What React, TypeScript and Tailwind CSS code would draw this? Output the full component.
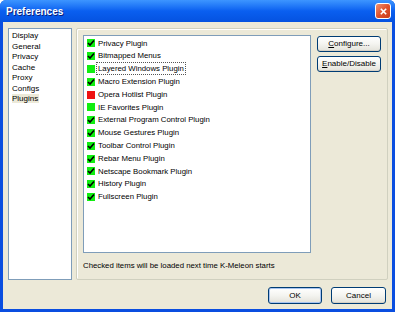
import React from 'react';

type Plugin = { name: string; state: 'on' | 'off' | 'bad' };

const plugins: Plugin[] = [
  { name: 'Privacy Plugin', state: 'on' },
  { name: 'Bitmapped Menus', state: 'on' },
  { name: 'Layered Windows Plugin', state: 'off' },
  { name: 'Macro Extension Plugin', state: 'on' },
  { name: 'Opera Hotlist Plugin', state: 'bad' },
  { name: 'IE Favorites Plugin', state: 'off' },
  { name: 'External Program Control Plugin', state: 'on' },
  { name: 'Mouse Gestures Plugin', state: 'on' },
  { name: 'Toolbar Control Plugin', state: 'on' },
  { name: 'Rebar Menu Plugin', state: 'on' },
  { name: 'Netscape Bookmark Plugin', state: 'on' },
  { name: 'History Plugin', state: 'on' },
  { name: 'Fullscreen Plugin', state: 'on' },
];

const pages = ['Display', 'General', 'Privacy', 'Cache', 'Proxy', 'Configs', 'Plugins'];

function StateIcon({ state }: { state: Plugin['state'] }) {
  const fill = state === 'bad' ? 'bg-[#ee1111]' : 'bg-[#11ee11]';
  return (
    <span className={`relative w-[8px] h-[8px] shrink-0 ${fill}`}>
      {state === 'on' && (
        <svg viewBox="0 0 8 8" className="absolute inset-0 w-[8px] h-[8px]">
          <path d="M1 4 L3 6 L7 1.5" fill="none" stroke="#000" strokeWidth="1.6" />
        </svg>
      )}
    </span>
  );
}

function XpButton({ children, className = '' }: { children: React.ReactNode; className?: string }) {
  return (
    <button
      className={`flex items-center justify-center rounded-[3px] border border-[#003c74] bg-gradient-to-b from-white via-[#f4f4f0] to-[#e3e2da] text-[8px] text-black shadow-[inset_0_-1px_0_#d6d0c5] ${className}`}
    >
      {children}
    </button>
  );
}

export default function App() {
  return (
    <div
      className="w-[395px] h-[312px] flex flex-col bg-[#0a4ee0] rounded-t-[6px] overflow-hidden"
      style={{ fontFamily: '"Liberation Sans", Arial, sans-serif' }}
    >
      {/* Title bar */}
      <div className="h-[22px] shrink-0 flex items-center justify-between pl-[6px] pr-[4px] bg-gradient-to-b from-[#3d95ff] via-[#0a5ff0] to-[#0552e0]">
        <span className="text-white font-bold text-[10px] [text-shadow:1px_1px_0_#0a1e7a]">Preferences</span>
        <div className="w-[16px] h-[16px] rounded-[3px] border border-white bg-gradient-to-br from-[#f09070] via-[#e0522c] to-[#c83a18] flex items-center justify-center">
          <svg viewBox="0 0 10 10" className="w-[9px] h-[9px]">
            <path d="M2 2 L8 8 M8 2 L2 8" stroke="#fff" strokeWidth="1.8" />
          </svg>
        </div>
      </div>

      {/* Client */}
      <div className="flex-1 mx-[3px] mb-[3px] bg-[#ece9d8] flex flex-col pt-[6px] pl-[5px] pr-[4px]">
        <div className="flex gap-[4px] h-[252px]">
          {/* Page list */}
          <div className="w-[64px] bg-white border border-[#7f9db9] pt-[2px] pl-[2px] text-[8px] leading-[10.5px] text-black">
            {pages.map((p) => (
              <div key={p} className="pl-[1px]">
                <span className={p === 'Plugins' ? 'bg-[#ece9d8] pr-[1px]' : ''}>{p}</span>
              </div>
            ))}
          </div>

          {/* Group */}
          <div className="flex-1 border border-[#d0d0bf] rounded-[2px] shadow-[inset_1px_1px_0_#fff] pt-[6px] pl-[6px] flex flex-col">
            <div className="flex gap-[6px]">
              <div className="w-[228px] h-[218px] bg-white border border-[#7f9db9] pt-[1px] pl-[3px]">
                {plugins.map((pl) => (
                  <div key={pl.name} className="h-[12.8px] flex items-center gap-[3px] text-[7.8px] text-black">
                    <StateIcon state={pl.state} />
                    <span
                      className={
                        pl.name === 'Layered Windows Plugin'
                          ? 'outline outline-1 outline-dotted outline-[#555] px-[1px] -ml-[1px] leading-[11px]'
                          : ''
                      }
                    >
                      {pl.name}
                    </span>
                  </div>
                ))}
              </div>
              <div className="flex flex-col gap-[4px] pt-[1px]">
                <XpButton className="w-[64px] h-[16px]">
                  <span>
                    <span className="underline">C</span>onfigure...
                  </span>
                </XpButton>
                <XpButton className="w-[64px] h-[16px]">
                  <span>
                    <span className="underline">E</span>nable/Disable
                  </span>
                </XpButton>
              </div>
            </div>
            <div className="mt-[7px] text-[7.8px] text-black">Checked items will be loaded next time K-Meleon starts</div>
          </div>
        </div>

        {/* Bottom buttons */}
        <div className="flex justify-end gap-[9px] mt-[7px] pr-[2px]">
          <XpButton className="w-[54px] h-[17px] border-[#003c74] shadow-[inset_0_0_0_1px_#a8c4f0]">OK</XpButton>
          <XpButton className="w-[55px] h-[17px]">Cancel</XpButton>
        </div>
      </div>
    </div>
  );
}
